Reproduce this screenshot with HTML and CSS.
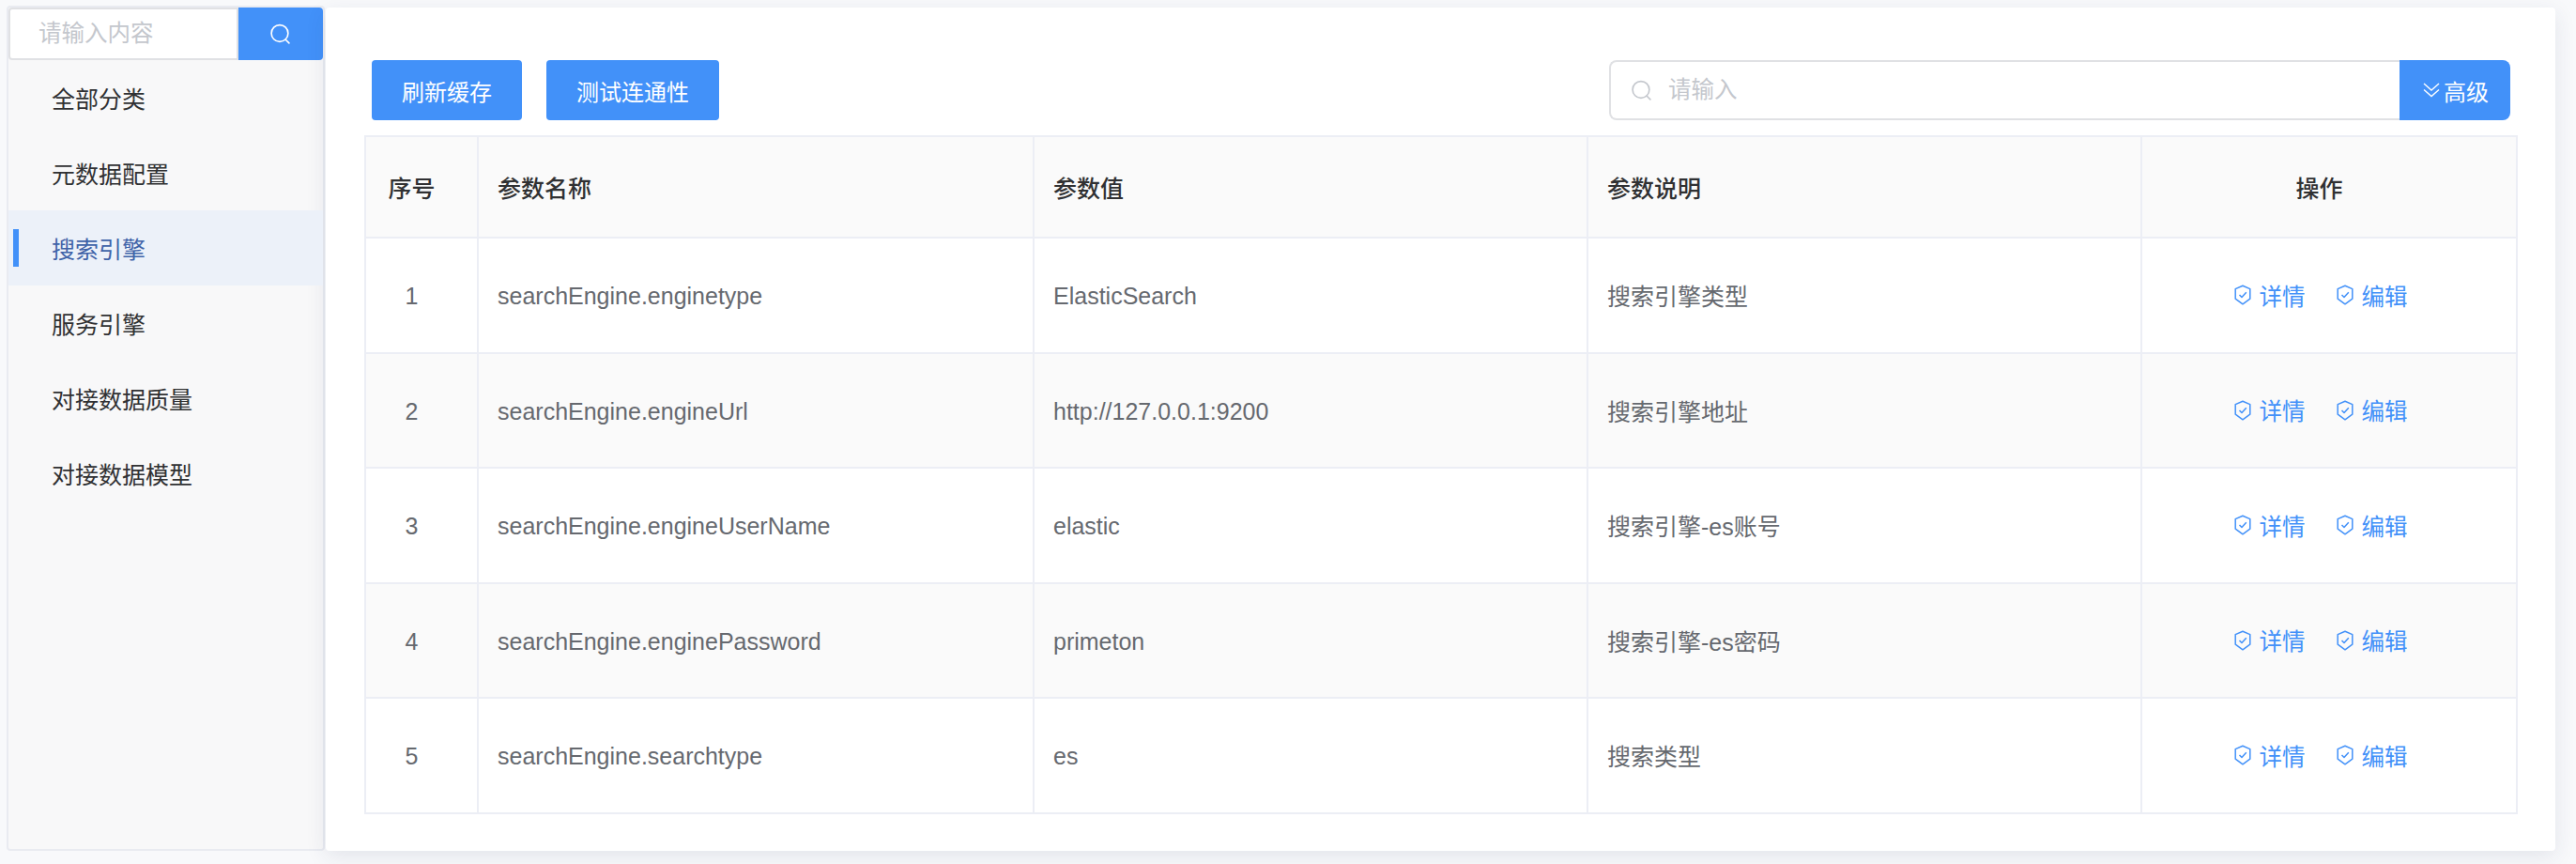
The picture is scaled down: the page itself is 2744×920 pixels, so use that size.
FILE: index.html
```html
<!DOCTYPE html>
<html lang="en">
<head>
    <meta charset="UTF-8">
    <meta name="viewport" content="width=device-width, initial-scale=1.0">
    <title>系统参数</title>
    <link rel="stylesheet" href="styles.css">
</head>
<body>
    <!-- Category sidebar -->
    <div class="sidebar">
        <div class="side-search">
            <input type="text" class="side-input" placeholder="请输入内容">
            <button class="side-search-btn" type="button">
                <svg class="icon-search" viewBox="0 0 22 22"><circle cx="10.5" cy="10" r="8.5"/><path d="M16.5 16.5L20 20"/></svg>
            </button>
        </div>
        <ul class="menu">
            <li class="menu-item">全部分类</li>
            <li class="menu-item">元数据配置</li>
            <li class="menu-item active">搜索引擎</li>
            <li class="menu-item">服务引擎</li>
            <li class="menu-item">对接数据质量</li>
            <li class="menu-item">对接数据模型</li>
        </ul>
    </div>

    <!-- Main content -->
    <div class="content">
        <div class="toolbar">
            <div class="toolbar-left">
                <button class="btn btn-cache" type="button">刷新缓存</button>
                <button class="btn btn-test" type="button">测试连通性</button>
            </div>
            <div class="top-search">
                <div class="top-input-wrap">
                    <svg class="icon-search icon-muted" viewBox="0 0 22 22"><circle cx="10.5" cy="10" r="8.5"/><path d="M16.5 16.5L20 20"/></svg>
                    <input type="text" class="top-input" placeholder="请输入">
                </div>
                <button class="adv-btn" type="button">
                    <svg class="icon-chevrons" viewBox="0 0 18 16"><path d="M1 1L9 8L17 1"/><path d="M1 7.5L9 14.5L17 7.5"/></svg>高级
                </button>
            </div>
        </div>

        <table class="data-table">
            <colgroup>
                <col class="col-index">
                <col class="col-name">
                <col class="col-value">
                <col class="col-desc">
                <col class="col-action">
            </colgroup>
            <thead>
                <tr>
                    <th class="center">序号</th>
                    <th>参数名称</th>
                    <th>参数值</th>
                    <th>参数说明</th>
                    <th class="center">操作</th>
                </tr>
            </thead>
            <tbody>
                <tr>
                    <td class="center latin">1</td>
                    <td class="latin">searchEngine.enginetype</td>
                    <td class="latin">ElasticSearch</td>
                    <td>搜索引擎类型</td>
                    <td class="center">
                        <div class="actions">
                            <a class="action"><svg class="icon-shield" viewBox="0 0 18 22"><path d="M9 1.2L16.8 4.6V15.2L9 20.8L1.2 15.2V4.6Z"/><path d="M5.5 11L8 13.5L12.8 8.2"/></svg>详情</a>
                            <a class="action"><svg class="icon-shield" viewBox="0 0 18 22"><path d="M9 1.2L16.8 4.6V15.2L9 20.8L1.2 15.2V4.6Z"/><path d="M5.5 11L8 13.5L12.8 8.2"/></svg>编辑</a>
                        </div>
                    </td>
                </tr>
                <tr>
                    <td class="center latin">2</td>
                    <td class="latin">searchEngine.engineUrl</td>
                    <td class="latin">http://127.0.0.1:9200</td>
                    <td>搜索引擎地址</td>
                    <td class="center">
                        <div class="actions">
                            <a class="action"><svg class="icon-shield" viewBox="0 0 18 22"><path d="M9 1.2L16.8 4.6V15.2L9 20.8L1.2 15.2V4.6Z"/><path d="M5.5 11L8 13.5L12.8 8.2"/></svg>详情</a>
                            <a class="action"><svg class="icon-shield" viewBox="0 0 18 22"><path d="M9 1.2L16.8 4.6V15.2L9 20.8L1.2 15.2V4.6Z"/><path d="M5.5 11L8 13.5L12.8 8.2"/></svg>编辑</a>
                        </div>
                    </td>
                </tr>
                <tr>
                    <td class="center latin">3</td>
                    <td class="latin">searchEngine.engineUserName</td>
                    <td class="latin">elastic</td>
                    <td>搜索引擎-es账号</td>
                    <td class="center">
                        <div class="actions">
                            <a class="action"><svg class="icon-shield" viewBox="0 0 18 22"><path d="M9 1.2L16.8 4.6V15.2L9 20.8L1.2 15.2V4.6Z"/><path d="M5.5 11L8 13.5L12.8 8.2"/></svg>详情</a>
                            <a class="action"><svg class="icon-shield" viewBox="0 0 18 22"><path d="M9 1.2L16.8 4.6V15.2L9 20.8L1.2 15.2V4.6Z"/><path d="M5.5 11L8 13.5L12.8 8.2"/></svg>编辑</a>
                        </div>
                    </td>
                </tr>
                <tr>
                    <td class="center latin">4</td>
                    <td class="latin">searchEngine.enginePassword</td>
                    <td class="latin">primeton</td>
                    <td>搜索引擎-es密码</td>
                    <td class="center">
                        <div class="actions">
                            <a class="action"><svg class="icon-shield" viewBox="0 0 18 22"><path d="M9 1.2L16.8 4.6V15.2L9 20.8L1.2 15.2V4.6Z"/><path d="M5.5 11L8 13.5L12.8 8.2"/></svg>详情</a>
                            <a class="action"><svg class="icon-shield" viewBox="0 0 18 22"><path d="M9 1.2L16.8 4.6V15.2L9 20.8L1.2 15.2V4.6Z"/><path d="M5.5 11L8 13.5L12.8 8.2"/></svg>编辑</a>
                        </div>
                    </td>
                </tr>
                <tr>
                    <td class="center latin">5</td>
                    <td class="latin">searchEngine.searchtype</td>
                    <td class="latin">es</td>
                    <td>搜索类型</td>
                    <td class="center">
                        <div class="actions">
                            <a class="action"><svg class="icon-shield" viewBox="0 0 18 22"><path d="M9 1.2L16.8 4.6V15.2L9 20.8L1.2 15.2V4.6Z"/><path d="M5.5 11L8 13.5L12.8 8.2"/></svg>详情</a>
                            <a class="action"><svg class="icon-shield" viewBox="0 0 18 22"><path d="M9 1.2L16.8 4.6V15.2L9 20.8L1.2 15.2V4.6Z"/><path d="M5.5 11L8 13.5L12.8 8.2"/></svg>编辑</a>
                        </div>
                    </td>
                </tr>
            </tbody>
        </table>
    </div>
</body>
</html>
```

FILE: styles.css
```css
* {
    margin: 0;
    padding: 0;
    box-sizing: border-box;
}

body {
    font-family: "Liberation Sans", "Noto Sans CJK SC", sans-serif;
    font-size: 25px;
    background-color: #F8F9FB;
    display: flex;
    align-items: flex-start;
    gap: 1px;
    height: 920px;
    padding: 6px 22px 0 7px;
    overflow: hidden;
}

input {
    font-family: inherit;
    font-size: 24.5px;
}

button {
    font-family: inherit;
    font-size: 24px;
}

/* Sidebar */
.sidebar {
    width: 339px;
    height: 900px;
    flex-shrink: 0;
    background-color: #F8F8F9;
    border: 2px solid #E9EBF1;
    border-radius: 4px;
}

.side-search {
    display: flex;
    height: 56px;
}

.side-input {
    width: 245px;
    padding-left: 30px;
    border: 2px solid #E0E1E4;
    border-radius: 4px 0 0 4px;
    background-color: #fff;
    outline: none;
}

.side-input::placeholder,
.top-input::placeholder {
    color: #C4C7CD;
}

.side-search-btn {
    width: 90px;
    padding-right: 2px;
    border: none;
    border-radius: 0 4px 4px 0;
    background-color: #4291F9;
    display: flex;
    align-items: center;
    justify-content: center;
}

.icon-search {
    width: 23px;
    height: 23px;
    fill: none;
    stroke: #fff;
    stroke-width: 1.6;
    stroke-linecap: round;
    flex-shrink: 0;
}

.icon-muted {
    stroke: #C4C7CD;
}

.menu {
    list-style: none;
}

.menu-item {
    height: 80px;
    line-height: 85px;
    padding-left: 46px;
    color: #303133;
    position: relative;
}

.menu-item.active {
    background-color: #ECF1F9;
    color: #3F63A8;
}

.menu-item.active::before {
    content: "";
    position: absolute;
    left: 5px;
    top: 20px;
    width: 6px;
    height: 40px;
    background-color: #4291F9;
}

/* Main panel */
.content {
    flex: 1;
    height: 898px;
    margin-top: 2px;
    padding-top: 56px;
    background-color: #fff;
    border-radius: 4px;
    box-shadow: 0 6px 22px rgba(40, 50, 90, 0.1);
}

.toolbar {
    display: flex;
    justify-content: space-between;
    margin: 0 48px 16px 49px;
}

.toolbar-left {
    display: flex;
    gap: 26px;
}

.btn {
    height: 64px;
    border: none;
    border-radius: 4px;
    background-color: #4291F9;
    color: #fff;
}

.btn-cache {
    width: 160px;
}

.btn-test {
    width: 184px;
}

.top-search {
    display: flex;
    width: 960px;
    height: 64px;
}

.top-input-wrap {
    flex: 1;
    display: flex;
    align-items: center;
    gap: 17px;
    padding-left: 21px;
    border: 2px solid #E0E1E4;
    border-right: none;
    border-radius: 8px 0 0 8px;
}

.top-input {
    flex: 1;
    border: none;
    outline: none;
}

.adv-btn {
    width: 118px;
    padding-left: 2px;
    border: none;
    border-radius: 0 8px 8px 0;
    background-color: #4291F9;
    color: #fff;
    display: flex;
    align-items: center;
    justify-content: center;
    gap: 4px;
}

.icon-chevrons {
    width: 18px;
    height: 16px;
    fill: none;
    stroke: #fff;
    stroke-width: 1.4;
}

/* Table */
.data-table {
    width: 2292px;
    margin-left: 41px;
    border-collapse: collapse;
    table-layout: fixed;
    color: #66696F;
}

.col-index { width: 120px; }
.col-name { width: 592px; }
.col-value { width: 590px; }
.col-desc { width: 590px; }
.col-action { width: 400px; }

.data-table th,
.data-table td {
    border: 2px solid #ECEEF5;
    padding: 0 21px 0 20px;
    text-align: left;
}

.data-table .center {
    text-align: center;
    padding: 0 21px 0 0;
}

.data-table .latin {
    padding-top: 3px;
}

.data-table th {
    height: 108px;
    background-color: #FAFAFA;
    color: #303133;
    font-weight: 500;
}

.data-table td {
    height: 122.5px;
}

.data-table tbody tr:nth-child(even) {
    background-color: #FAFAFA;
}

.actions {
    display: flex;
    justify-content: center;
    gap: 33px;
    padding-left: 3px;
    font-size: 24.5px;
}

.action {
    display: flex;
    align-items: center;
    gap: 9px;
    color: #4291F9;
}

.icon-shield {
    width: 18px;
    height: 22px;
    fill: none;
    stroke: #4291F9;
    stroke-width: 1.5;
    stroke-linejoin: round;
}
```
